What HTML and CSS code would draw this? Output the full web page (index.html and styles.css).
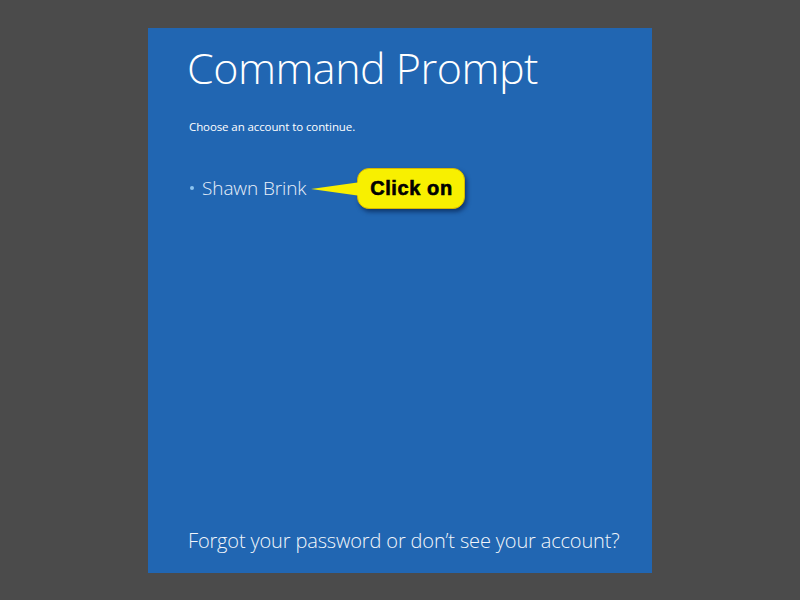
FILE: index.html
```html
<!DOCTYPE html>
<html>
<head>
<meta charset="utf-8">
<link rel="stylesheet" href="styles.css">
</head>
<body>
<div class="panel">
  <h1 class="title">Command Prompt</h1>
  <p class="sub">Choose an account to continue.</p>
  <div class="account-row">
    <span class="bullet"></span>
    <span class="name">Shawn Brink</span>
    <div class="callout">
      <svg class="pointer" width="52" height="20" viewBox="0 0 52 20">
        <path d="M0 10 L50 3 L50 17 Z" fill="#f8f000"/>
      </svg>
      <span class="callout-text">Click on</span>
    </div>
  </div>
  <div class="spacer"></div>
  <p class="forgot">Forgot your password or don’t see your account?</p>
</div>
</body>
</html>
```
FILE: styles.css
```css
html, body {
  margin: 0;
  padding: 0;
}
body {
  width: 800px;
  height: 600px;
  background: #4b4b4b;
  padding-top: 28px;
  padding-left: 148px;
  box-sizing: border-box;
  font-family: "Open Sans", "Noto Sans", sans-serif;
}
.panel {
  width: 504px;
  height: 545px;
  background: #2166b2;
  box-sizing: border-box;
  padding: 0 0 0 40px;
  display: flex;
  flex-direction: column;
  color: #ffffff;
}
.title {
  margin: 12px 0 0 -1px;
  font-weight: 300;
  font-size: 43px;
  line-height: 56px;
  letter-spacing: -0.5px;
}
.sub {
  margin: 23px 0 0 1px;
  font-size: 11.5px;
  line-height: 15px;
  letter-spacing: -0.1px;
}
.account-row {
  margin-top: 33px;
  display: flex;
  align-items: center;
  height: 42px;
}
.bullet {
  width: 4px;
  height: 4px;
  border-radius: 50%;
  background: #8cc4f0;
  margin: 0 8px 0 2px;
}
.name {
  font-size: 19px;
  font-weight: 300;
  color: #e8f0fa;
  letter-spacing: -0.1px;
}
.callout {
  position: relative;
  margin-left: 51px;
  width: 108px;
  height: 41px;
  box-sizing: border-box;
  background: #f8f000;
  border: 1px solid #d8b800;
  border-radius: 12px;
  box-shadow: 2px 3px 4px rgba(0, 20, 60, 0.55);
  display: flex;
  align-items: center;
  justify-content: center;
}
.pointer {
  position: absolute;
  left: -47px;
  top: 10px;
}
.callout-text {
  font-family: "Liberation Sans", Arial, sans-serif;
  font-weight: 700;
  font-size: 20px;
  letter-spacing: 0.6px;
  color: #000000;
  -webkit-text-stroke: 0.6px #000;
}
.spacer {
  flex: 1;
}
.forgot {
  margin: 0 0 18px 0;
  font-size: 20px;
  font-weight: 300;
  line-height: 28px;
  letter-spacing: -0.15px;
  color: #f2f6fb;
}
```
